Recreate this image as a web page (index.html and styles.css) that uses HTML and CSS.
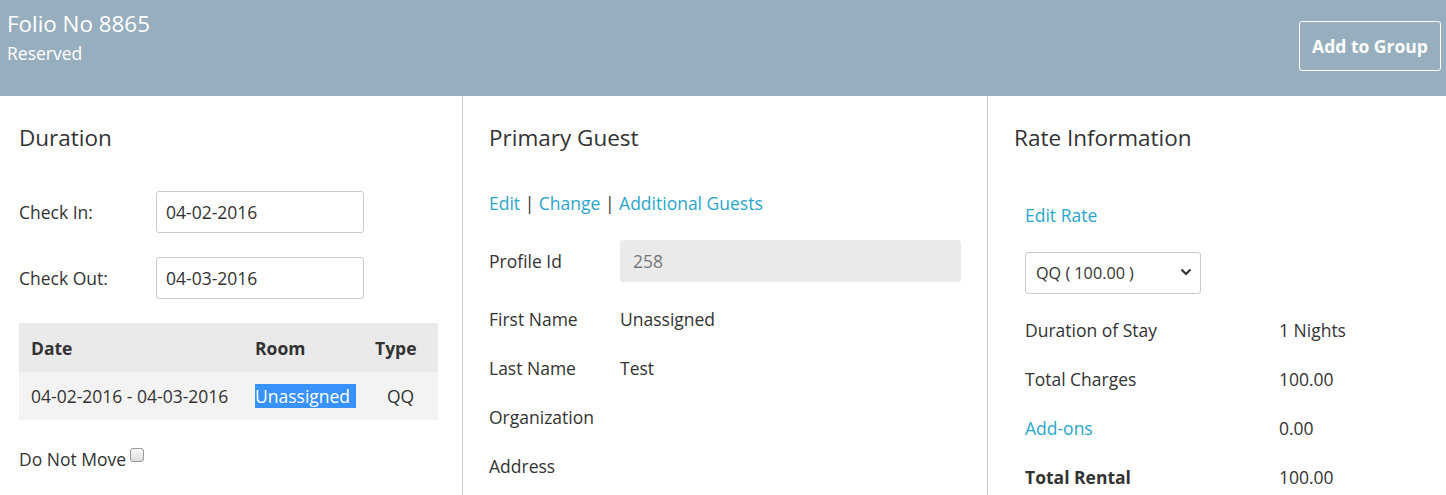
FILE: index.html
```html
<!DOCTYPE html>
<html>
<head>
<meta charset="utf-8">
<link rel="stylesheet" href="styles.css">
</head>
<body>
<header class="topbar">
  <div class="folio">
    <div class="folio-title">Folio No 8865</div>
    <div class="folio-status">Reserved</div>
  </div>
  <button class="btn-outline">Add to Group</button>
</header>
<main class="columns">
  <section class="col col-duration">
    <h2 class="col-title">Duration</h2>
    <div class="form-row">
      <label class="form-label">Check In:</label>
      <input class="text-input date-input" type="text" value="04-02-2016">
    </div>
    <div class="form-row">
      <label class="form-label">Check Out:</label>
      <input class="text-input date-input" type="text" value="04-03-2016">
    </div>
    <table class="stay-table">
      <thead>
        <tr><th class="c-date">Date</th><th class="c-room">Room</th><th class="c-type">Type</th></tr>
      </thead>
      <tbody>
        <tr><td>04-02-2016 - 04-03-2016</td><td><span class="selected-text">Unassigned</span></td><td class="center">QQ</td></tr>
      </tbody>
    </table>
    <div class="check-row">Do Not Move<input type="checkbox" class="check"></div>
  </section>
  <section class="col col-guest">
    <h2 class="col-title">Primary Guest</h2>
    <div class="links"><a href="#">Edit</a> | <a href="#">Change</a> | <a href="#">Additional Guests</a></div>
    <div class="form-row guest-row">
      <label class="form-label guest-label">Profile Id</label>
      <input class="text-input profile-input" type="text" value="258" readonly>
    </div>
    <div class="info-list guest-list">
      <div class="info-row"><span class="info-label guest-label">First Name</span><span>Unassigned</span></div>
      <div class="info-row"><span class="info-label guest-label">Last Name</span><span>Test</span></div>
      <div class="info-row"><span class="info-label guest-label">Organization</span><span></span></div>
      <div class="info-row"><span class="info-label guest-label">Address</span><span></span></div>
    </div>
  </section>
  <section class="col col-rate">
    <h2 class="col-title">Rate Information</h2>
    <div class="rate-body">
      <div class="edit-rate"><a href="#">Edit Rate</a></div>
      <div class="select-box">
        <span>QQ ( 100.00 )</span>
        <svg class="chev" width="12" height="8" viewBox="0 0 12 8"><path d="M1.5 1.5 L6 6 L10.5 1.5" fill="none" stroke="#333" stroke-width="2.2"/></svg>
      </div>
      <div class="info-list rate-list">
        <div class="info-row"><span class="info-label rate-label">Duration of Stay</span><span>1 Nights</span></div>
        <div class="info-row"><span class="info-label rate-label">Total Charges</span><span>100.00</span></div>
        <div class="info-row"><span class="info-label rate-label"><a href="#">Add-ons</a></span><span>0.00</span></div>
        <div class="info-row"><span class="info-label rate-label strong">Total Rental</span><span>100.00</span></div>
      </div>
    </div>
  </section>
</main>
</body>
</html>
```
FILE: styles.css
```css
* { box-sizing: border-box; }
html, body { margin: 0; padding: 0; }
body {
  font-family: "Open Sans", "Liberation Sans", sans-serif;
  font-size: 17.5px;
  line-height: 24px;
  color: #333;
  background: #fff;
  overflow: hidden;
  height: 495px;
}
a { color: #2aa6cc; text-decoration: none; }

.topbar {
  height: 96px;
  background: #97aebe;
  display: flex;
  justify-content: space-between;
  align-items: flex-start;
  padding: 0 5px 0 7px;
  color: #fff;
}
.folio { padding-top: 9px; }
.folio-title { font-size: 22.4px; line-height: 30px; }
.folio-status { font-size: 17.5px; line-height: 28px; }
.btn-outline {
  margin-top: 21px;
  width: 142px;
  height: 50px;
  background: transparent;
  border: 1px solid #fff;
  border-radius: 3px;
  color: #fff;
  font-family: inherit;
  font-weight: 700;
  font-size: 17.5px;
  padding: 0;
}

.columns {
  display: grid;
  grid-template-columns: 462px 525px 1fr;
  height: 399px;
}
.col { border-left: 1px solid #ccc; }
.col-duration { border-left: none; padding: 0 24px 0 19px; }
.col-guest { padding: 0 25px 0 26px; }
.col-rate { padding: 0 20px 0 26px; }

.col-title {
  font-size: 22.5px;
  font-weight: 400;
  line-height: 30px;
  margin: 27px 0 0;
}

.form-row { display: flex; align-items: center; }
.col-duration .form-row { margin-top: 24px; }
.col-duration .form-row:first-of-type { margin-top: 38px; }
.form-label { width: 137px; flex: none; }
.text-input {
  font-family: inherit;
  font-size: 17.5px;
  color: #333;
  border: 1px solid #ccc;
  border-radius: 3px;
  padding: 0 9px;
  outline: none;
}
.date-input { width: 208px; height: 42px; }

.stay-table {
  margin-top: 24px;
  width: 100%;
  border-collapse: collapse;
  table-layout: fixed;
}
.stay-table th {
  background: #eaeaea;
  text-align: left;
  font-weight: 700;
  height: 49px;
  padding: 0 12px;
}
.stay-table td {
  background: #f3f3f3;
  height: 48px;
  padding: 0 12px;
  white-space: nowrap;
}
.c-date { width: 224px; }
.c-room { width: 120px; }
.center { text-align: center; }
.selected-text {
  background: #3892fb;
  color: #fff;
  padding: 0 6px 0 0;
}
.check-row { margin-top: 28px; line-height: 22px; }
.check {
  -webkit-appearance: none;
  appearance: none;
  margin: 0 0 0 4px;
  width: 14px;
  height: 14px;
  border: 1px solid #9a9a9a;
  border-radius: 3px;
  background: linear-gradient(#fafafa, #dcdcdc);
  vertical-align: 4px;
}

.links { margin-top: 39px; line-height: 22px; }
.guest-row { margin-top: 26px; }
.guest-label { width: 131px; flex: none; }
.profile-input {
  width: 341px;
  height: 42px;
  background: #eaeaea;
  border-color: #eaeaea;
  color: #777;
  padding: 0 12px;
}
.info-list { margin-top: 13px; }
.guest-list { margin-top: 12px; }
.info-row { display: flex; align-items: center; height: 49px; }
.info-label { display: inline-block; }

.rate-body { padding-left: 11px; }
.edit-rate { margin-top: 51px; line-height: 22px; }
.select-box {
  margin-top: 26px;
  width: 176px;
  height: 42px;
  border: 1px solid #ccc;
  border-radius: 3px;
  display: flex;
  align-items: center;
  justify-content: space-between;
  padding: 0 8px 0 10px;
  font-size: 16.2px;
}
.chev { margin-top: -2px; }
.rate-list { margin-top: 11px; }
.rate-label { width: 254px; flex: none; }
.strong { font-weight: 700; }
```
